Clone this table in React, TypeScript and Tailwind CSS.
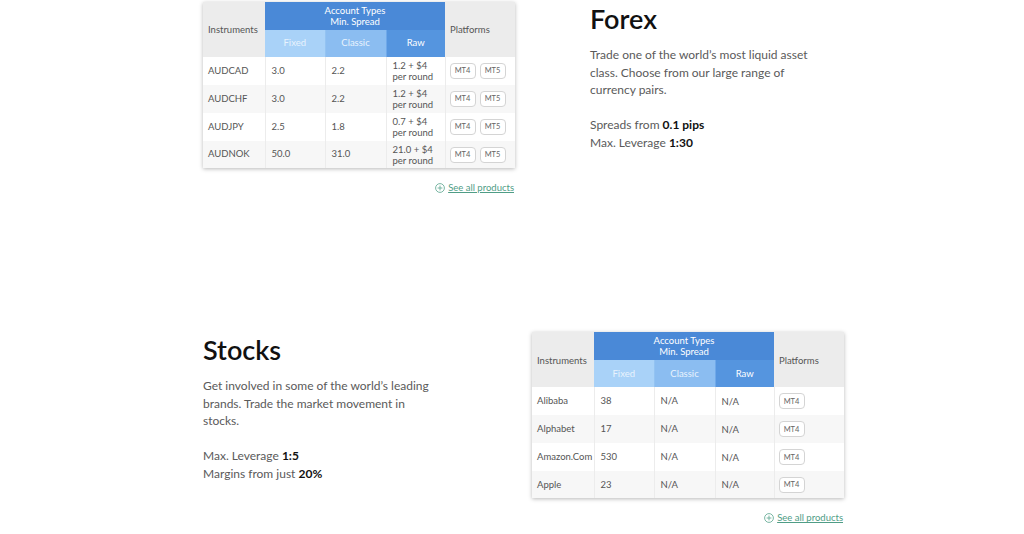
import React from 'react';

type Row = { name: string; fixed: string; classic: string; raw: React.ReactNode; platforms: string[] };

const forexRows: Row[] = [
    { name: 'AUDCAD', fixed: '3.0', classic: '2.2', raw: <>1.2 + $4<br />per round</>, platforms: ['MT4', 'MT5'] },
    { name: 'AUDCHF', fixed: '3.0', classic: '2.2', raw: <>1.2 + $4<br />per round</>, platforms: ['MT4', 'MT5'] },
    { name: 'AUDJPY', fixed: '2.5', classic: '1.8', raw: <>0.7 + $4<br />per round</>, platforms: ['MT4', 'MT5'] },
    { name: 'AUDNOK', fixed: '50.0', classic: '31.0', raw: <>21.0 + $4<br />per round</>, platforms: ['MT4', 'MT5'] },
];

const stockRows: Row[] = [
    { name: 'Alibaba', fixed: '38', classic: 'N/A', raw: 'N/A', platforms: ['MT4'] },
    { name: 'Alphabet', fixed: '17', classic: 'N/A', raw: 'N/A', platforms: ['MT4'] },
    { name: 'Amazon.Com', fixed: '530', classic: 'N/A', raw: 'N/A', platforms: ['MT4'] },
    { name: 'Apple', fixed: '23', classic: 'N/A', raw: 'N/A', platforms: ['MT4'] },
];

const SpreadTable: React.FC<{ rows: Row[] }> = ({ rows }) => (
    <div className="w-[312px]">
        <table className="w-[312px] border-collapse table-fixed text-[9.5px] text-[#555] shadow-[0_1px_4px_rgba(0,0,0,0.28)]">
            <colgroup>
                <col className="w-[62px]" />
                <col className="w-[60px]" />
                <col className="w-[61px]" />
                <col className="w-[59px]" />
                <col className="w-[70px]" />
            </colgroup>
            <thead>
                <tr className="h-[28px]">
                    <th rowSpan={2} className="bg-[#ececec] text-left font-normal pl-[5px] pt-[2px] text-[#555]">Instruments</th>
                    <th colSpan={3} className="bg-[#4a89d7] text-white font-normal leading-[11px] text-center">
                        Account Types<br />Min. Spread
                    </th>
                    <th rowSpan={2} className="bg-[#ececec] text-left font-normal pl-[5px] pt-[2px] text-[#555]">Platforms</th>
                </tr>
                <tr className="h-[27px]">
                    <th className="bg-[#a9d2f8] text-[#e8f3fd] font-normal border-r border-[#93c3f2]">Fixed</th>
                    <th className="bg-[#8bbdf1] text-[#e8f3fd] font-normal border-r border-[#6fa9ea]">Classic</th>
                    <th className="bg-[#5595df] text-white font-normal">Raw</th>
                </tr>
            </thead>
            <tbody>
                {rows.map((r, i) => (
                    <tr key={r.name} className={`${i === rows.length - 1 ? 'h-[27px]' : 'h-[28px]'} ${i % 2 === 1 ? 'bg-[#f7f7f7]' : 'bg-white'}`}>
                        <td className="pl-[5px] border-r border-[#ececec] whitespace-nowrap">{r.name}</td>
                        <td className="pl-[6px] border-r border-[#ececec]">{r.fixed}</td>
                        <td className="pl-[6px] border-r border-[#ececec]">{r.classic}</td>
                        <td className="pl-[6px] border-r border-[#ececec] leading-[11px]">{r.raw}</td>
                        <td className="pl-[4px]">
                            <div className="flex gap-[4px]">
                                {r.platforms.map(p => (
                                    <span key={p} className="inline-flex items-center justify-center h-[16px] w-[26px] rounded-[4px] border border-[#d4d4d4] bg-white text-[7.5px] text-[#666]">
                                        {p}
                                    </span>
                                ))}
                            </div>
                        </td>
                    </tr>
                ))}
            </tbody>
        </table>
        <div className="flex justify-end mt-[13px] pr-[1px]">
            <a className="flex items-center gap-[3px] text-[9.5px] text-[#4f9d86] underline">
                <svg width="10" height="10" viewBox="0 0 10 10" fill="none" stroke="#6aae98" strokeWidth="0.9">
                    <circle cx="5" cy="5" r="4.4" />
                    <path d="M5 2.6v4.8M2.6 5h4.8" />
                </svg>
                See all products
            </a>
        </div>
    </div>
);

export default function App() {
    return (
        <div className="w-[1024px] h-[534px] bg-white overflow-hidden font-['Lato',sans-serif]">
            <div className="ml-[203px] w-[641px]">
                {/* Forex */}
                <section className="flex pt-[2px]">
                    <SpreadTable rows={forexRows} />
                    <div className="ml-[75px] w-[230px]">
                        <h2 className="text-[27px] font-semibold text-[#111] leading-[34px]">Forex</h2>
                        <p className="mt-[10px] text-[12px] leading-[17.5px] text-[#5a5a5a]">
                            Trade one of the world’s most liquid asset<br />
                            class. Choose from our large range of<br />
                            currency pairs.
                        </p>
                        <p className="mt-[17.5px] text-[12px] leading-[17.5px] text-[#5a5a5a]">
                            Spreads from <b className="text-[#111]">0.1 pips</b><br />
                            Max. Leverage <b className="text-[#111]">1:30</b>
                        </p>
                    </div>
                </section>

                {/* Stocks */}
                <section className="flex mt-[137px]">
                    <div className="w-[240px]">
                        <h2 className="text-[27px] font-semibold text-[#111] leading-[34px] mt-[1px]">Stocks</h2>
                        <p className="mt-[10px] text-[12px] leading-[17.5px] text-[#5a5a5a]">
                            Get involved in some of the world’s leading<br />
                            brands. Trade the market movement in<br />
                            stocks.
                        </p>
                        <p className="mt-[17.5px] text-[12px] leading-[17.5px] text-[#5a5a5a]">
                            Max. Leverage <b className="text-[#111]">1:5</b><br />
                            Margins from just <b className="text-[#111]">20%</b>
                        </p>
                    </div>
                    <div className="ml-auto">
                        <SpreadTable rows={stockRows} />
                    </div>
                </section>
            </div>
        </div>
    );
}
